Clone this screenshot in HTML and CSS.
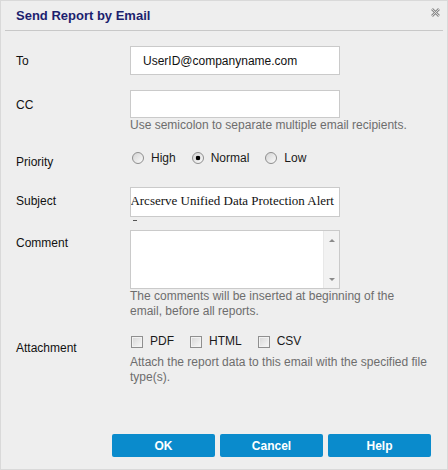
FILE: index.html
```html
<!DOCTYPE html>
<html>
<head>
<meta charset="utf-8">
<link rel="stylesheet" href="styles.css">
</head>
<body>
<div class="dialog">
  <div class="header">
    <span class="title">Send Report by Email</span>
    <svg class="close" width="9" height="9" viewBox="0 0 9 9">
      <path d="M1 1 L8 8 M8 1 L1 8" stroke="#8c8c8c" stroke-width="2.6" fill="none"/>
      <path d="M1 1 L8 8 M8 1 L1 8" stroke="#e2e2e2" stroke-width="0.9" fill="none"/>
    </svg>
  </div>
  <div class="form">
    <div class="row">
      <div class="label">To</div>
      <div class="field">
        <div class="textbox">UserID@companyname.com</div>
      </div>
    </div>
    <div class="row row-cc">
      <div class="label">CC</div>
      <div class="field">
        <div class="textbox textbox-cc"></div>
        <div class="hint">Use semicolon to separate multiple email recipients.</div>
      </div>
    </div>
    <div class="row row-priority">
      <div class="label label-priority">Priority</div>
      <div class="field options">
        <label class="option"><input class="radio" type="radio" name="p">High</label>
        <label class="option"><input class="radio" type="radio" name="p" checked>Normal</label>
        <label class="option"><input class="radio" type="radio" name="p">Low</label>
      </div>
    </div>
    <div class="row row-subject">
      <div class="label label-subject">Subject</div>
      <div class="field">
        <div class="textbox textbox-subject">Arcserve Unified Data Protection Alert</div>
        <div class="subject-mark"></div>
      </div>
    </div>
    <div class="row row-comment">
      <div class="label label-top">Comment</div>
      <div class="field">
        <div class="textarea">
          <div class="scrollbar">
            <span class="arrow-up"></span>
            <span class="arrow-down"></span>
          </div>
        </div>
        <div class="hint">The comments will be inserted at beginning of the email, before all reports.</div>
      </div>
    </div>
    <div class="row row-attach">
      <div class="label label-attach">Attachment</div>
      <div class="field">
        <div class="checks">
          <label class="option"><input class="check" type="checkbox">PDF</label>
          <label class="option"><input class="check" type="checkbox">HTML</label>
          <label class="option"><input class="check" type="checkbox">CSV</label>
        </div>
        <div class="hint hint-attach">Attach the report data to this email with the specified file type(s).</div>
      </div>
    </div>
  </div>
  <div class="footer">
    <button class="btn">OK</button>
    <button class="btn">Cancel</button>
    <button class="btn">Help</button>
  </div>
</div>
</body>
</html>
```
FILE: styles.css
```css
* { box-sizing: border-box; }
body {
  margin: 0;
  font-family: "Liberation Sans", Arial, sans-serif;
  font-size: 12px;
  color: #111;
  background: #ffffff;
}
.dialog {
  width: 448px;
  height: 470px;
  border: 1px solid #d9d9d9;
  background: #eeeeee;
  display: flex;
  flex-direction: column;
}
.header {
  height: 30px;
  margin: 0 4px;
  border-bottom: 1px solid #c8c8c8;
  display: flex;
  justify-content: space-between;
  align-items: center;
  padding-left: 11px;
}
.title {
  font-weight: bold;
  font-size: 13px;
  color: #1c1f6e;
}
.close {
  align-self: flex-start;
  margin-top: 7px;
  margin-right: 3px;
}
.form {
  padding: 15px 19px 0 15px;
}
.row {
  display: grid;
  grid-template-columns: 114px 1fr;
  align-items: start;
}
.label {
  line-height: 16px;
  padding-top: 7px;
  color: #111;
}
.label-priority { padding-top: 4px; }
.label-subject { padding-top: 6px; }
.label-top { padding-top: 5px; }
.label-attach { padding-top: 6px; }
.row-cc { margin-top: 15px; }
.row-priority { margin-top: 17px; }
.row-subject { margin-top: 17px; }
.row-comment { margin-top: 9px; }
.row-attach { margin-top: 15px; }
.textbox {
  width: 210px;
  height: 29px;
  border: 1px solid #cacaca;
  background: #fff;
  padding: 1px 0 0 12px;
  display: flex;
  align-items: center;
  font-size: 12px;
  color: #111;
  white-space: nowrap;
  overflow: hidden;
}
.textbox-cc { height: 28px; }
.textbox-subject {
  height: 30px;
  font-family: "Liberation Serif", "Times New Roman", serif;
  font-size: 13px;
  justify-content: flex-end;
  padding: 0 5px 3px 0;
}
.subject-mark {
  width: 4px;
  height: 1px;
  background: #555;
  margin: 3px 0 0 3px;
}
.hint {
  color: #6d6d6d;
  line-height: 15px;
}
.hint-attach { margin-top: 6px; }
.options {
  display: flex;
  gap: 16px;
  line-height: 16px;
  padding-left: 2px;
}
.option {
  display: flex;
  align-items: center;
  gap: 7px;
  color: #1a1a1a;
}
.radio {
  appearance: none;
  -webkit-appearance: none;
  width: 12px;
  height: 12px;
  margin: 0;
  border-radius: 50%;
  border: 1px solid #8e8e8e;
  background: linear-gradient(135deg, #d4d4d4, #fbfbfb);
}
.radio:checked {
  background:
    radial-gradient(circle, #000 0 2px, transparent 2.6px),
    linear-gradient(135deg, #d4d4d4, #fbfbfb);
}
.textarea {
  width: 210px;
  height: 59px;
  border: 1px solid #cacaca;
  background: #fff;
  display: flex;
  justify-content: flex-end;
}
.scrollbar {
  width: 16px;
  background: #f2f2f2;
  border-left: 1px solid #e8e8e8;
  display: flex;
  flex-direction: column;
  justify-content: space-between;
  align-items: center;
  padding: 8px 0 7px;
}
.arrow-up {
  width: 0;
  height: 0;
  border-left: 3px solid transparent;
  border-right: 3px solid transparent;
  border-bottom: 3px solid #8a8a8a;
}
.arrow-down {
  width: 0;
  height: 0;
  border-left: 3px solid transparent;
  border-right: 3px solid transparent;
  border-top: 3px solid #8a8a8a;
}
.checks {
  display: flex;
  gap: 16px;
  line-height: 15px;
  padding-left: 1px;
}
.check {
  appearance: none;
  -webkit-appearance: none;
  width: 12px;
  height: 12px;
  margin: 0;
  border: 1px solid #8f8f8f;
  background: linear-gradient(135deg, #d6d6d6, #f8f8f8);
  box-shadow: inset 0 0 0 1px #f2f2f2;
}
.footer {
  margin-top: auto;
  display: flex;
  justify-content: flex-end;
  gap: 5px;
  padding: 0 16px 12px 0;
}
.btn {
  width: 103px;
  height: 23px;
  border: none;
  border-radius: 2px;
  background: #0a8bcc;
  color: #fff;
  font-family: "Liberation Sans", Arial, sans-serif;
  font-weight: bold;
  font-size: 12px;
  padding: 0;
}
```
